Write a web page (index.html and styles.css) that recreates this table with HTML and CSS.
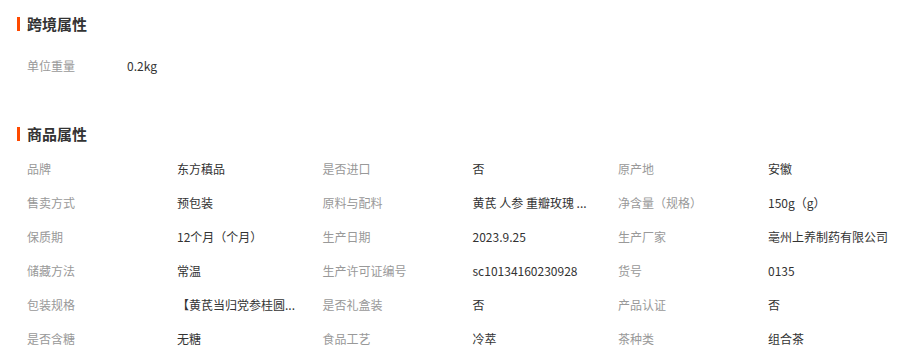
FILE: index.html
```html
<!DOCTYPE html>
<html lang="zh-CN">
<head>
<meta charset="utf-8">
<link rel="stylesheet" href="styles.css">
</head>
<body>
<section class="section section-cross">
  <h2 class="title">跨境属性</h2>
  <div class="list-single">
    <div class="item item-narrow"><span class="label">单位重量</span><span class="value">0.2kg</span></div>
  </div>
</section>
<section class="section section-goods">
  <h2 class="title">商品属性</h2>
  <div class="grid">
    <div class="item"><span class="label">品牌</span><span class="value">东方稹品</span></div>
    <div class="item"><span class="label">是否进口</span><span class="value">否</span></div>
    <div class="item"><span class="label">原产地</span><span class="value">安徽</span></div>

    <div class="item"><span class="label">售卖方式</span><span class="value">预包装</span></div>
    <div class="item"><span class="label">原料与配料</span><span class="value">黄芪 人参 重瓣玫瑰 ...</span></div>
    <div class="item"><span class="label">净含量（规格）</span><span class="value">150g（g）</span></div>

    <div class="item"><span class="label">保质期</span><span class="value">12个月（个月）</span></div>
    <div class="item"><span class="label">生产日期</span><span class="value">2023.9.25</span></div>
    <div class="item"><span class="label">生产厂家</span><span class="value">亳州上养制药有限公司</span></div>

    <div class="item"><span class="label">储藏方法</span><span class="value">常温</span></div>
    <div class="item"><span class="label">生产许可证编号</span><span class="value">sc10134160230928</span></div>
    <div class="item"><span class="label">货号</span><span class="value">0135</span></div>

    <div class="item"><span class="label">包装规格</span><span class="value">【黄芪当归党参桂圆...</span></div>
    <div class="item"><span class="label">是否礼盒装</span><span class="value">否</span></div>
    <div class="item"><span class="label">产品认证</span><span class="value">否</span></div>

    <div class="item"><span class="label">是否含糖</span><span class="value">无糖</span></div>
    <div class="item"><span class="label">食品工艺</span><span class="value">冷萃</span></div>
    <div class="item"><span class="label">茶种类</span><span class="value">组合茶</span></div>
  </div>
</section>
</body>
</html>
```

FILE: styles.css
```css
* { box-sizing: border-box; }
html, body {
  margin: 0;
  padding: 0;
  background: #ffffff;
  font-family: "Microsoft YaHei", "Noto Sans CJK SC", "Noto Sans", sans-serif;
  font-size: 12px;
  color: #333333;
}
.section {
  padding-left: 17px;
}
.section-cross {
  padding-top: 14px;
}
.section-goods {
  padding-top: 41px;
}
.title {
  margin: 0;
  height: 20px;
  line-height: 20px;
  font-size: 15px;
  font-weight: bold;
  color: #333333;
  display: flex;
  align-items: center;
}
.title::before {
  content: "";
  display: block;
  width: 3px;
  height: 14px;
  background: #ff4a00;
  margin-right: 7px;
}
.list-single {
  padding-left: 10px;
  margin-top: 15px;
}
.grid {
  padding-left: 10px;
  margin-top: 8px;
  display: grid;
  grid-template-columns: 295.5px 295.5px 295.5px;
}
.item {
  display: flex;
  align-items: center;
  height: 34px;
  line-height: 34px;
  white-space: nowrap;
}
.label {
  flex: 0 0 150px;
  color: #999999;
}
.item-narrow .label {
  flex-basis: 100px;
}
.value {
  color: #333333;
}
```
